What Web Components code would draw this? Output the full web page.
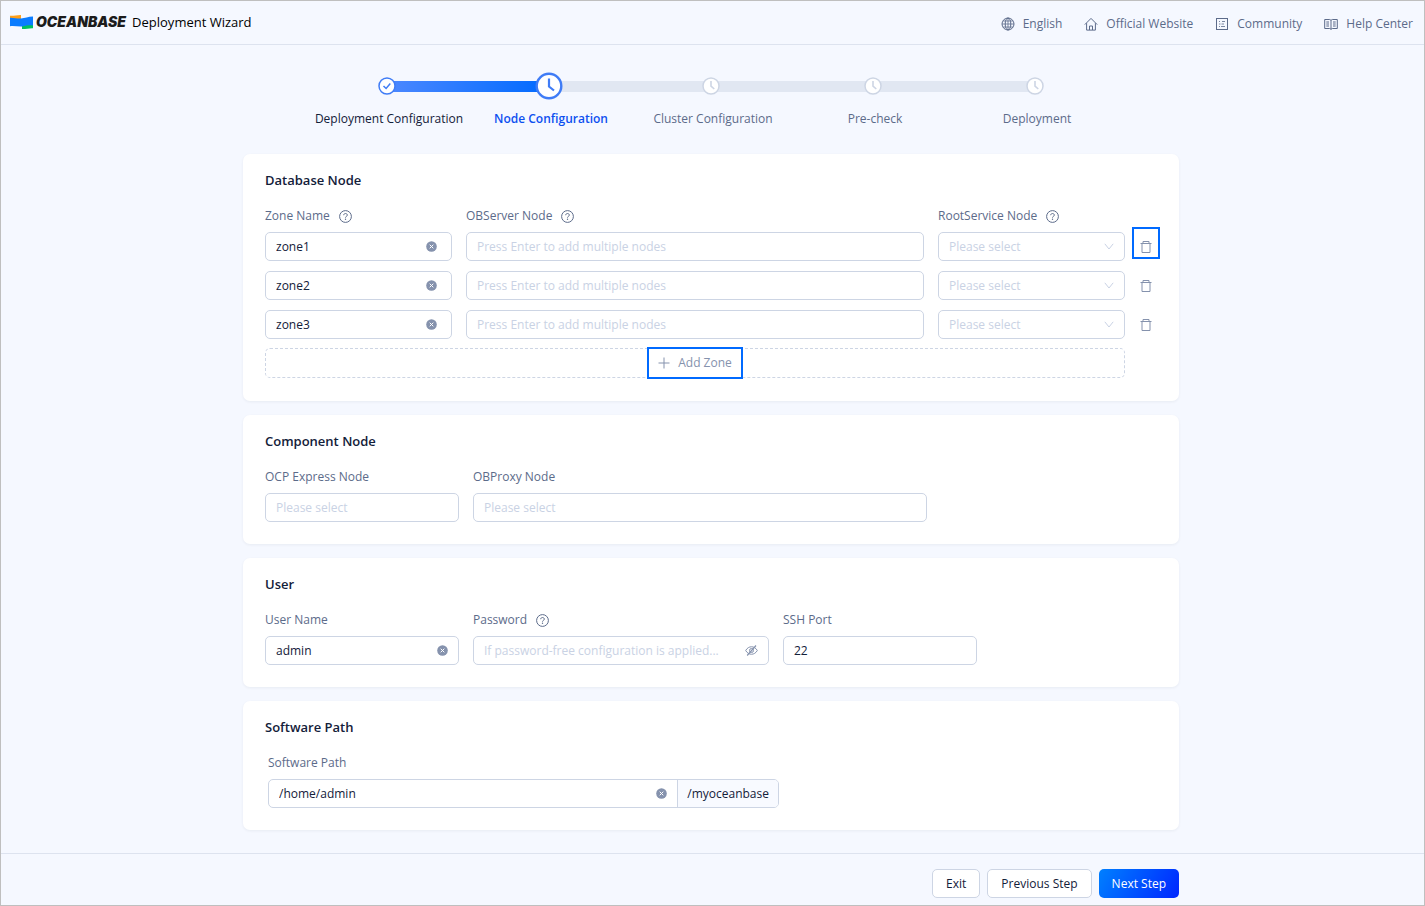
<!DOCTYPE html>
<html lang="en">
<head>
<meta charset="utf-8">
<meta name="viewport" content="width=device-width, initial-scale=1">
<title>OceanBase Deployment Wizard</title>
<style>
  *, *::before, *::after { box-sizing: border-box; }
  body {
    margin: 0; min-height: 100vh; background: #f5f8ff; border: 1px solid #bfbfbf;
    font: 12px/20px "Open Sans", "Noto Sans", sans-serif; color: #132039;
    --line: #cdd5e4; --muted: #5c6b8a; --hint: #c9d2e4; --blue: #006aff; --icon: #8592ad;
  }
  main { padding: 0 3px 0 0; }
</style>
</head>
<body>
<ob-header></ob-header>
<main>
  <ob-steps></ob-steps>
  <ob-page>
    <ob-card heading="Database Node">
      <ob-zones></ob-zones>
    </ob-card>
    <ob-card heading="Component Node">
      <ob-fields style="--cols: minmax(0,194px) minmax(0,454px)">
        <ob-field label="OCP Express Node" placeholder="Please select"></ob-field>
        <ob-field label="OBProxy Node" placeholder="Please select"></ob-field>
      </ob-fields>
    </ob-card>
    <ob-card heading="User">
      <ob-fields style="--cols: minmax(0,194px) minmax(0,296px) minmax(0,194px)">
        <ob-field label="User Name" value="admin" clear></ob-field>
        <ob-field label="Password" help secret placeholder="If password-free configuration is applied..."></ob-field>
        <ob-field label="SSH Port" value="22"></ob-field>
      </ob-fields>
    </ob-card>
    <ob-card heading="Software Path">
      <ob-fields style="--cols: minmax(0,511px); padding-left: 3px">
        <ob-field label="Software Path" value="/home/admin" clear addon="/myoceanbase"></ob-field>
      </ob-fields>
    </ob-card>
  </ob-page>
</main>
<ob-footer></ob-footer>

<script>
const svg = (w, h, body, extra = '') =>
  `<svg width="${w}" height="${h}" viewBox="0 0 ${w} ${h}" fill="none" stroke="currentColor" aria-hidden="true" ${extra}>${body}</svg>`;

const icons = {
  globe: svg(14, 14, '<circle cx="7" cy="7" r="6"/><ellipse cx="7" cy="7" rx="2.8" ry="6"/><path d="M7 1v12M1 7h12M2 4h10M2 10h10" stroke-width=".8"/>'),
  home: svg(14, 14, '<path d="M.8 7.6 7 1.4l6.2 6.2M2.6 6.2v6.9h8.8V6.2M5.5 13V9h3v4"/>'),
  list: svg(14, 14, '<rect x="1.5" y="1.5" width="11" height="11"/><path d="M4 4.500h1M7 4.500h3M4 7h1.500M6.500 7H9M4 9.500h1M6 9.500h4" stroke-width=".8"/>'),
  book: svg(14, 14, '<path d="M.7 2.500h5L7 3.300l1.300-.8h5v9h-5L7 12.300l-1.300-.8h-5zM7 3.300v9M2.300 5h2.700M2.300 7h2.700M2.300 9h2.700M9 5h2.700M9 7h2.700M9 9h2.700"/>'),
  help: svg(13, 13, '<circle cx="6.500" cy="6.500" r="5.900"/><path d="M4.700 5.200c0-2.300 3.700-2.200 3.600 0 0 1.200-1.800 1.200-1.800 2.400"/><circle cx="6.500" cy="9.300" r=".7" fill="currentColor" stroke="none"/>'),
  clear: svg(11, 11, '<circle cx="5.500" cy="5.500" r="5.300" fill="currentColor" stroke="none"/><path d="m3.700 3.700 3.600 3.600m0-3.600L3.700 7.300" stroke="#fff"/>'),
  eye: svg(13, 11, '<path d="M.7 5.500c2.700-5 8.900-5 11.600 0-2.700 5-8.900 5-11.600 0z"/><circle cx="6.500" cy="5.500" r="2"/><path d="M11 .5 2.200 10.500" stroke-width="1.200"/>'),
  trash: svg(12, 12, '<path d="M.5 2.500h11M3 2.500v-2h6v2M2 2.500v9h8v-9"/>'),
  chevron: svg(10, 7, '<path d="M.8.800 5 6 9.200.8"/>'),
  plus: svg(12, 12, '<path d="M6 .5v11M.5 6h11"/>'),
  check: svg(18, 18, '<circle cx="9" cy="9" r="8" fill="#fff" stroke="#3f7cf6" stroke-width="1.500"/><path d="m5.500 9 2.600 2.500 4.200-5" stroke="#3f7cf6" stroke-width="1.500"/>'),
  current: svg(28, 28, '<circle cx="14" cy="14" r="12.300" fill="#fff" stroke="#3f7cf6" stroke-width="2.400"/><path d="M14 6.500V14.500l5 4" stroke="#3f7cf6" stroke-width="2.200"/>'),
  wait: svg(18, 18, '<circle cx="9" cy="9" r="8" fill="#fff" stroke="#cdd5e4" stroke-width="1.500"/><path d="M9 4v5.200l3.300 2.800" stroke="#cdd5e4" stroke-width="1.600"/>'),
  logo: svg(24, 16, '<g stroke="none"><path d="M0 1.800c4 .2 7-1 11-.9v4L0 5z" fill="#ff9f1a"/><path d="M12 11c4 0 7-.5 11-.5v3.700c-4-.2-7 1-11 .9z" fill="#00c160"/><path d="M0 3.700c4-.2 6 1 11 .9 4-.2 7-2 12-2v8.800c-4-.2-7 .1-11 1.200-4 .2-8-1-12-.4z" fill="#0a7cff"/></g>')
};

const base = '<style>*,*::before,*::after{box-sizing:border-box}:host{display:block}svg{display:block;flex:none}button,input,select{font:inherit;color:inherit;margin:0}</style>';

class Base extends HTMLElement {
  connectedCallback() {
    if (this.shadowRoot) return;
    this.attachShadow({ mode: 'open' }).innerHTML = base + this.view();
  }
}

class ObHeader extends Base {
  view() {
    const links = [['globe', 'English'], ['home', 'Official Website'], ['list', 'Community'], ['book', 'Help Center']];
    return `<style>
      header { display: flex; align-items: center; justify-content: space-between; height: 44px; padding: 0 11px 0 9px; border-bottom: 1px solid #dde3ef; }
      .brand, nav, a { display: flex; align-items: center; }
      .brand { gap: 2px; padding-bottom: 2px; }
      .name { font: italic 900 14px/20px Inter, sans-serif; color: #1c1c1c; }
      .title { font-size: 13px; color: #000; margin: 0 0 0 4px; font-weight: 400; }
      nav { gap: 22px; padding-top: 2px; }
      a { gap: 8px; color: var(--muted); text-decoration: none; }
    </style>
    <header>
      <div class="brand">${icons.logo}<span class="name">OCEANBASE</span><h1 class="title">Deployment Wizard</h1></div>
      <nav>${links.map(([i, t]) => `<a href="#">${icons[i]}<span>${t}</span></a>`).join('')}</nav>
    </header>`;
  }
}

class ObSteps extends Base {
  view() {
    const steps = [['check', 'Deployment Configuration', 'done'], ['current', 'Node Configuration', 'now'],
      ['wait', 'Cluster Configuration', ''], ['wait', 'Pre-check', ''], ['wait', 'Deployment', '']];
    return `<style>
      ol { display: grid; grid-template-columns: repeat(5, 1fr); max-width: 810px; margin: 0 auto; padding: 26px 0 25px; list-style: none; }
      li { display: flex; flex-direction: column; align-items: center; gap: 8px; color: var(--muted); white-space: nowrap; }
      .mark { display: grid; width: 100%; height: 30px; align-items: center; }
      .mark > * { grid-area: 1 / 1; justify-self: center; z-index: 1; }
      .bar { width: 100%; height: 11px; background: #e1e7f2; z-index: 0; transform: translateX(50%); }
      .done .bar { background: linear-gradient(90deg, #4c88ff, #006aff); }
      li:last-child .bar { display: none; }
      .done { color: #132039; }
      .now { color: #0d50f0; font-weight: 600; }
      .label { padding-left: 4px; }
    </style>
    <ol>${steps.map(([i, t, c]) => `<li class="${c}"><div class="mark"><div class="bar"></div>${icons[i]}</div><span class="label">${t}</span></li>`).join('')}</ol>`;
  }
}

class ObPage extends Base {
  view() {
    return `<style>:host { display: flex; flex-direction: column; gap: 14px; max-width: 936px; margin: 0 auto; }</style><slot></slot>`;
  }
}

class ObCard extends Base {
  view() {
    return `<style>
      section { background: #fff; border-radius: 7px; padding: 16px 19px 22px 22px; box-shadow: 0 1px 3px rgba(19, 32, 57, .06); }
      h2 { margin: 0 0 16px; font-size: 13px; line-height: 20px; font-weight: 600; }
    </style><section><h2>${this.getAttribute('heading')}</h2><slot></slot></section>`;
  }
}

class ObFields extends Base {
  view() {
    return `<style>:host { display: grid; grid-template-columns: var(--cols); gap: 14px; }</style><slot></slot>`;
  }
}

class ObField extends Base {
  view() {
    const a = n => this.getAttribute(n) || '';
    const has = n => this.hasAttribute(n);
    const name = a('label');
    const control = has('select')
      ? `<select id="c" aria-label="${name}"><option>Please select</option></select><span class="chev">${icons.chevron}</span>`
      : `<input id="c" type="${has('secret') ? 'password' : 'text'}" aria-label="${name}" value="${a('value')}" placeholder="${a('placeholder')}">`;
    return `<style>
      .label { display: flex; align-items: center; gap: 9px; height: 20px; margin-bottom: 6px; color: var(--muted); white-space: nowrap; }
      .box { display: flex; align-items: center; height: 29px; border: 1px solid var(--line); border-radius: 5px; background: #fff; overflow: hidden; }
      input, select { flex: 1; min-width: 0; width: 100%; height: 27px; border: 0; outline: 0; background: none; padding: 0 10px; line-height: 20px; }
      input::placeholder { color: var(--hint); opacity: 1; }
      select { appearance: none; color: var(--hint); }
      .chev { color: var(--hint); margin-right: 10px; pointer-events: none; }
      .act { flex: none; display: flex; border: 0; padding: 0; background: none; color: var(--icon); margin-right: ${has('zone') ? 14 : 10}px; }
      .addon { flex: none; align-self: stretch; display: flex; align-items: center; padding: 0 9px; border-left: 1px solid var(--line); background: #f8faff; }
    </style>
    ${has('label-hidden') ? '' : `<div class="label"><label for="c">${name}</label>${has('help') ? icons.help : ''}</div>`}
    <div class="box">${control}
      ${has('clear') ? `<button class="act" type="button" aria-label="Clear">${icons.clear}</button>` : ''}
      ${has('secret') ? `<button class="act" type="button" aria-label="Show password">${icons.eye}</button>` : ''}
      ${has('addon') ? `<span class="addon">${a('addon')}</span>` : ''}
    </div>`;
  }
}

class ObZones extends Base {
  view() {
    const row = n => {
      const h = n === 1 ? 'help' : 'label-hidden';
      return `<div class="row">
        <ob-field label="Zone Name" zone ${h} value="zone${n}" clear></ob-field>
        <ob-field label="OBServer Node" ${h} placeholder="Press Enter to add multiple nodes"></ob-field>
        <ob-field label="RootService Node" ${h} select></ob-field>
        <button class="del ${n === 1 ? 'marked' : ''}" type="button" aria-label="Delete zone${n}">${icons.trash}</button>
      </div>`;
    };
    return `<style>
      :host { display: flex; flex-direction: column; gap: 10px; padding-bottom: 1px; }
      .row { display: grid; grid-template-columns: 187px minmax(0, 1fr) 187px 21px; column-gap: 14px; align-items: end; }
      .del { position: relative; display: grid; place-items: center; width: 28px; height: 29px; margin-left: -7px; padding: 0 1px 0 0; border: 0; background: none; color: var(--icon); }
      .marked::after { content: ""; position: absolute; inset: -5px 0 2px; border: 2px solid var(--blue); }
      .add { display: flex; align-items: center; justify-content: center; height: 30px; margin: -1px 35px 0 0; padding: 0; border: 1px dashed var(--line); border-radius: 5px; background: none; color: var(--icon); }
      .add span { display: flex; align-items: center; gap: 8px; height: 32px; padding: 0 9px; border: 2px solid var(--blue); background: #fff; }
    </style>
    ${[1, 2, 3].map(row).join('')}
    <button class="add" type="button"><span>${icons.plus}Add Zone</span></button>`;
  }
}

class ObFooter extends Base {
  view() {
    return `<style>
      footer { margin-top: 23px; border-top: 1px solid #dde3ef; padding: 15px 3px 7px 0; }
      div { display: flex; justify-content: flex-end; gap: 7px; max-width: 936px; margin: 0 auto; }
      button { height: 29px; padding: 0 13px; border: 1px solid var(--line); border-radius: 5px; background: #fff; }
      .primary { border: 0; color: #fff; background: linear-gradient(120deg, #0080ff, #0026ff); }
    </style>
    <footer><div><button type="button">Exit</button><button type="button">Previous Step</button><button type="button" class="primary">Next Step</button></div></footer>`;
  }
}

customElements.define('ob-header', ObHeader);
customElements.define('ob-steps', ObSteps);
customElements.define('ob-page', ObPage);
customElements.define('ob-card', ObCard);
customElements.define('ob-fields', ObFields);
customElements.define('ob-field', ObField);
customElements.define('ob-zones', ObZones);
customElements.define('ob-footer', ObFooter);
</script>
</body>
</html>
